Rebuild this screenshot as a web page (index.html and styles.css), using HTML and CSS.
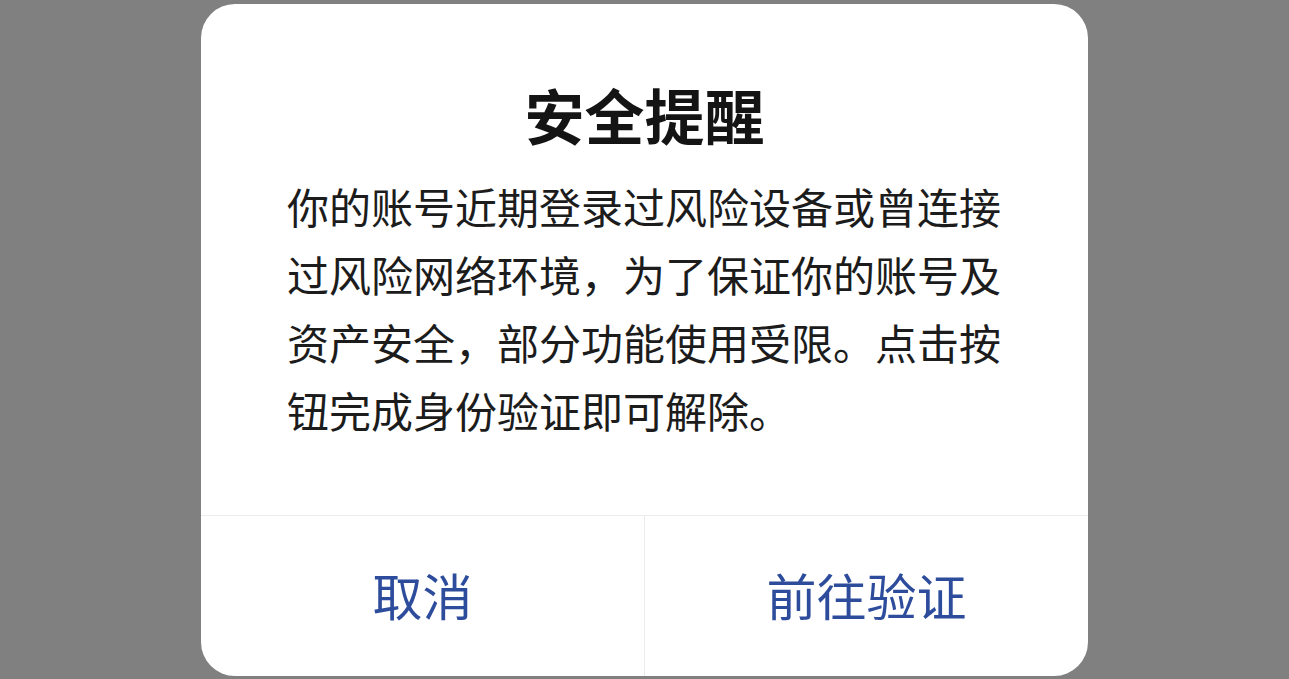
FILE: index.html
```html
<!DOCTYPE html>
<html lang="zh-CN">
<head>
<meta charset="utf-8">
<title>安全提醒</title>
<link rel="stylesheet" href="styles.css">
</head>
<body>
<div class="stage">
  <div class="dialog">
    <div class="content">
      <h1 class="title">安全提醒</h1>
      <p class="message">你的账号近期登录过风险设备或曾连接过风险网络环境，为了保证你的账号及资产安全，部分功能使用受限。点击按钮完成身份验证即可解除。</p>
    </div>
    <div class="actions">
      <div class="btn">取消</div>
      <div class="btn btn-right">前往验证</div>
    </div>
  </div>
</div>
</body>
</html>
```
FILE: styles.css
```css
html, body {
  margin: 0;
  padding: 0;
  height: 100%;
  background: #808080;
}
body {
  font-family: "Noto Sans CJK SC", "Noto Sans", sans-serif;
}
.stage {
  display: flex;
  justify-content: center;
  padding-top: 4px;
}
.dialog {
  width: 887px;
  height: 672px;
  background: #ffffff;
  border-radius: 34px;
  display: flex;
  flex-direction: column;
  overflow: hidden;
}
.content {
  flex: 1;
  padding: 70px 86px 0 86px;
}
.title {
  margin: 0;
  font-size: 60px;
  line-height: 80px;
  font-weight: 700;
  color: #141414;
  text-align: center;
}
.message {
  margin: 18px 0 0 0;
  font-size: 42px;
  line-height: 68px;
  color: #1c1c1c;
  text-align: left;
}
.actions {
  height: 160px;
  border-top: 1px solid #ececec;
  display: flex;
}
.btn {
  flex: 1;
  display: flex;
  align-items: center;
  justify-content: center;
  padding-bottom: 4px;
  font-size: 50px;
  color: #2d4c9c;
}
.btn-right {
  border-left: 1px solid #ececec;
}
```
